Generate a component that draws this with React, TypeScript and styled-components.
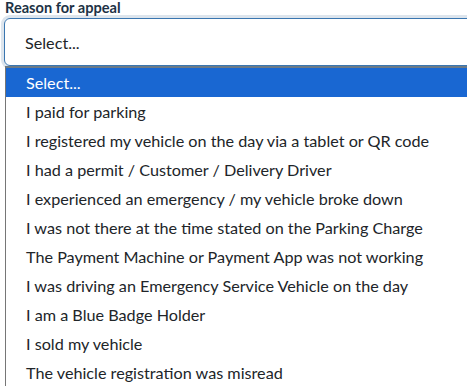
import styled, { createGlobalStyle } from "styled-components";

const options = [
  "Select...",
  "I paid for parking",
  "I registered my vehicle on the day via a tablet or QR code",
  "I had a permit / Customer / Delivery Driver",
  "I experienced an emergency / my vehicle broke down",
  "I was not there at the time stated on the Parking Charge",
  "The Payment Machine or Payment App was not working",
  "I was driving an Emergency Service Vehicle on the day",
  "I am a Blue Badge Holder",
  "I sold my vehicle",
  "The vehicle registration was misread",
];

export default function App() {
  return (
    <>
      <GlobalStyle />
      <Page>
        <Label>Reason for appeal</Label>
        <SelectBox>Select...</SelectBox>
        <Dropdown>
          {options.map((o, i) => (
            <Option key={o} $active={i === 0}>
              {o}
            </Option>
          ))}
        </Dropdown>
      </Page>
    </>
  );
}

const GlobalStyle = createGlobalStyle`
  html, body {
    margin: 0;
    background: #ffffff;
    overflow: hidden;
  }
  body {
    font-family: Lato, "Liberation Sans", sans-serif;
    color: #212529;
  }
`;

const Page = styled.div`
  width: 467px;
  height: 386px;
  overflow: hidden;
  padding-left: 4px;
  box-sizing: border-box;
`;

const Label = styled.div`
  font-size: 14.6px;
  font-weight: 700;
  line-height: 15px;
  color: #1d3245;
  padding-left: 1px;
  height: 18px;
`;

const SelectBox = styled.div`
  width: 500px;
  height: 48px;
  box-sizing: border-box;
  border: 1px solid #3a76b0;
  border-radius: 6px;
  box-shadow: 0 0 0 3px #dde5ed;
  display: flex;
  align-items: center;
  padding-left: 20px;
  font-size: 16.2px;
  color: #212529;
`;

const Dropdown = styled.div`
  margin-left: 1px;
  border-left: 1px solid #767676;
  border-top: 2px solid #6b7a86;
  width: 500px;
`;

const Option = styled.div<{ $active?: boolean }>`
  height: 29px;
  line-height: 29px;
  padding-left: 20px;
  font-size: 16.2px;
  white-space: nowrap;
  background: ${(p) => (p.$active ? "#1967d2" : "transparent")};
  color: ${(p) => (p.$active ? "#ffffff" : "#212529")};
`;
